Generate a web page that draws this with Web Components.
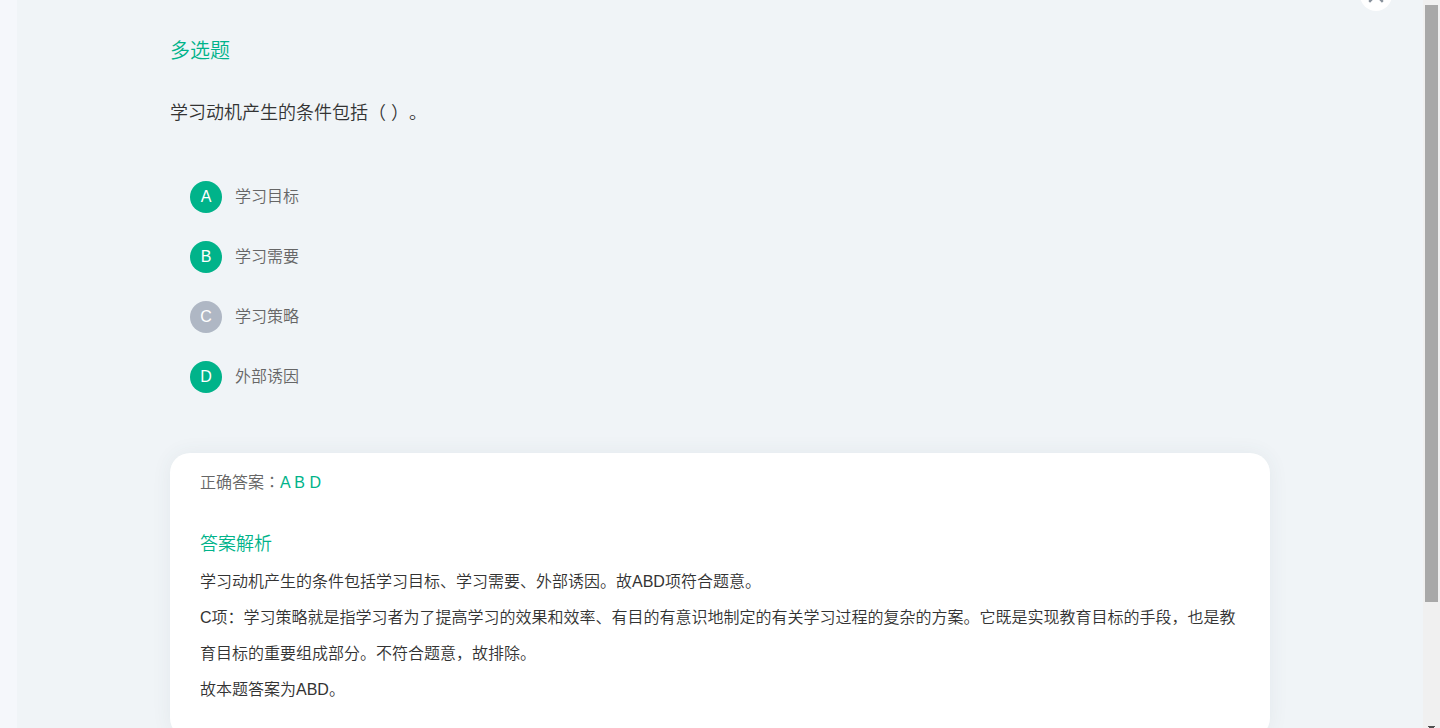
<!DOCTYPE html>
<html lang="zh-CN">
<head>
  <meta charset="UTF-8">
  <meta name="viewport" content="width=device-width, initial-scale=1.0">
  <title>多选题</title>
  <style>
    body {
      margin: 0;
      font-family: "Liberation Sans", "Noto Sans CJK SC", sans-serif;
      font-weight: 350;
      font-size: 16px;
      text-spacing-trim: space-all;
      color: #333;
      --green: #00b38a;
      --gray: #afb7c4;
    }
    .mid {
      font-family: "Noto Sans CJK TC", sans-serif;
      line-height: 1;
    }
  </style>
</head>
<body>
  <question-page>
    <question-head type="多选题">学习动机产生的条件包括（ ）。</question-head>
    <option-list>
      <option-item data-letter="A" checked>学习目标</option-item>
      <option-item data-letter="B" checked>学习需要</option-item>
      <option-item data-letter="C">学习策略</option-item>
      <option-item data-letter="D" checked>外部诱因</option-item>
    </option-list>
    <answer-card>
      <span slot="label">正确答案<span class="mid" lang="zh-TW">：</span></span>
      <span slot="answer">A B D</span>
      <span slot="title">答案解析</span>
      <div>学习动机产生的条件包括学习目标、学习需要、外部诱因。故ABD项符合题意。</div>
      <div>C项：学习策略就是指学习者为了提高学习的效果和效率、有目的有意识地制定的有关学习过程的复杂的方案。它既是实现教育目标的手段，也是教育目标的重要组成部分。不符合题意，故排除。</div>
      <div>故本题答案为ABD。</div>
    </answer-card>
  </question-page>

  <script>
    class BaseElement extends HTMLElement {
      constructor() {
        super();
        this.attachShadow({ mode: 'open' });
      }

      connectedCallback() {
        this.shadowRoot.innerHTML = this.getTemplate();
      }
    }

    class QuestionPage extends BaseElement {
      getTemplate() {
        return `
          <style>
            :host {
              display: flex;
              height: 100vh;
              overflow: hidden;
              background-color: #f5f7fb;
              padding-left: 17px;
              box-sizing: border-box;
            }
            main {
              position: relative;
              flex: 1;
              min-width: 0;
              overflow: hidden;
              background-color: #f0f4f7;
            }
            .content {
              max-width: 1100px;
              margin: 0 auto;
              padding: 31px 0;
            }
          </style>

          <main>
            <close-button></close-button>
            <div class="content"><slot></slot></div>
          </main>
          <scroll-track></scroll-track>
        `;
      }
    }

    class CloseButton extends BaseElement {
      getTemplate() {
        return `
          <style>
            /* sticks out above the top edge */
            :host {
              display: block;
              position: absolute;
              top: -21px;
              right: 31px;
            }
            button {
              display: flex;
              align-items: center;
              justify-content: center;
              width: 32px;
              height: 32px;
              padding: 0;
              border: 0;
              border-radius: 50%;
              background-color: #fff;
              cursor: pointer;
            }
          </style>

          <button type="button" aria-label="关闭">
            <svg width="16" height="16" viewBox="0 0 16 16" fill="none" stroke="#87909b" stroke-width="2.4">
              <path d="M1.2 1.2L14.8 14.8M14.8 1.2L1.2 14.8"/>
            </svg>
          </button>
        `;
      }
    }

    class ScrollTrack extends BaseElement {
      getTemplate() {
        return `
          <style>
            :host {
              display: flex;
              flex-direction: column;
              justify-content: space-between;
              align-items: center;
              width: 17px;
              padding-top: 5px;
              box-sizing: border-box;
              background-color: #f0f0f0;
            }
            .thumb {
              width: 13px;
              height: 82vh;
              background-color: #a8a8a8;
            }
            svg {
              display: block;
            }
          </style>

          <div class="thumb"></div>
          <svg width="7" height="2" viewBox="0 0 7 2" fill="#505050"><path d="M0 0H7V1H6V2H1V1H0Z"/></svg>
        `;
      }
    }

    class QuestionHead extends BaseElement {
      getTemplate() {
        return `
          <style>
            :host {
              display: block;
            }
            h1,
            p {
              margin: 0;
              font-weight: inherit;
              line-height: 40px;
            }
            h1 {
              font-size: 20px;
              color: var(--green);
            }
            p {
              margin-top: 22px;
              font-size: 18px;
            }
          </style>

          <h1>${this.getAttribute('type')}</h1>
          <p><slot></slot></p>
        `;
      }
    }

    class OptionList extends BaseElement {
      getTemplate() {
        return `
          <style>
            :host {
              display: flex;
              flex-direction: column;
              margin: 34px 0 46px;
              padding: 0 20px;
            }
          </style>

          <slot></slot>
        `;
      }
    }

    class OptionItem extends BaseElement {
      getTemplate() {
        return `
          <style>
            :host {
              display: flex;
              align-items: center;
              gap: 13px;
              height: 60px;
              line-height: 32px;
              color: #666;
            }
            .letter {
              width: 32px;
              border-radius: 50%;
              text-align: center;
              color: #fff;
              background-color: var(--gray);
            }
            :host([checked]) .letter {
              background-color: var(--green);
            }
          </style>

          <span class="letter">${this.dataset.letter}</span>
          <span><slot></slot></span>
        `;
      }
    }

    class AnswerCard extends BaseElement {
      getTemplate() {
        return `
          <style>
            :host {
              display: block;
              padding: 12px 30px 30px;
              border-radius: 20px;
              background-color: #fff;
              box-shadow: 0 0 20px rgba(60, 80, 100, 0.07);
              line-height: 36px;
            }
            .answer {
              display: flex;
              color: #666;
            }
            .green {
              color: var(--green);
            }
            h2 {
              margin: 25px 0 2px;
              font-size: 18px;
              font-weight: inherit;
              color: var(--green);
            }
          </style>

          <div class="answer">
            <slot name="label"></slot>
            <span class="green"><slot name="answer"></slot></span>
          </div>
          <h2><slot name="title"></slot></h2>
          <slot></slot>
        `;
      }
    }

    customElements.define('question-page', QuestionPage);
    customElements.define('close-button', CloseButton);
    customElements.define('scroll-track', ScrollTrack);
    customElements.define('question-head', QuestionHead);
    customElements.define('option-list', OptionList);
    customElements.define('option-item', OptionItem);
    customElements.define('answer-card', AnswerCard);
  </script>
</body>
</html>
